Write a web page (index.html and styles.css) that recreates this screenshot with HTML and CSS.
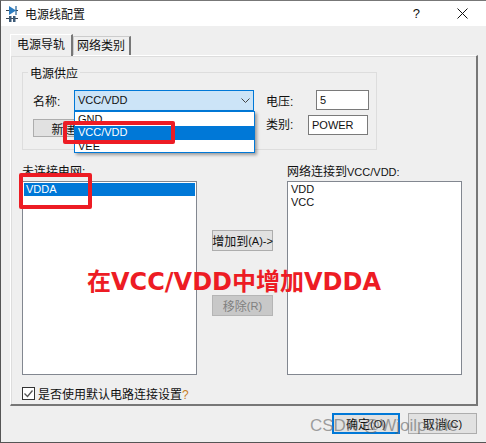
FILE: index.html
```html
<!DOCTYPE html>
<html lang="zh-CN">
<head>
    <meta charset="UTF-8">
    <meta name="viewport" content="width=device-width, initial-scale=1.0">
    <title>电源线配置</title>
    <link rel="stylesheet" href="styles.css">
</head>
<body>
    <div class="dialog">
        <!-- Title bar -->
        <div class="titlebar">
            <svg class="app-icon" width="12" height="16" viewBox="0 0 12 16">
                <path d="M0 4.5h3M10 4.5h2M0 12.5h12" stroke="#3c4650" stroke-width="1" fill="none"/>
                <path d="M3 0l7 4.5-7 4.5z" fill="#2b7cc0"/>
                <path d="M10 0v9" stroke="#1f5f96" stroke-width="1.2"/>
                <rect x="3" y="10" width="2.5" height="6" fill="#3c5a78"/>
                <rect x="7" y="10" width="2.5" height="6" fill="#3c5a78"/>
            </svg>
            <span class="title-text">电源线配置</span>
            <span class="help-btn">?</span>
            <svg class="close-btn" width="11" height="11" viewBox="0 0 11 11">
                <path d="M0.5 0.5l10 10M10.5 0.5l-10 10" stroke="#111" stroke-width="1" fill="none"/>
            </svg>
        </div>

        <div class="body">
            <!-- Tabs -->
            <div class="tabs">
                <div class="tab tab-active">电源导轨</div>
                <div class="tab">网络类别</div>
            </div>

            <div class="pane">
                <fieldset class="group">
                    <legend>电源供应</legend>
                    <div class="group-row">
                        <label class="name-label">名称:</label>
                        <div class="combo">
                            <span class="latin">VCC/VDD</span>
                            <svg width="9" height="5" viewBox="0 0 9 5"><path d="M0.5 0.5l4 4 4-4" stroke="#444" fill="none"/></svg>
                        </div>
                        <label class="volt-label">电压:</label>
                        <div class="input input-volt latin">5</div>
                    </div>
                    <div class="group-row row-two">
                        <div class="btn btn-new">新建</div>
                        <label class="class-label">类别:</label>
                        <div class="input input-class latin">POWER</div>
                    </div>
                </fieldset>

                <div class="lists">
                    <div class="list-col">
                        <div class="list-title">未连接电网:</div>
                        <div class="listbox">
                            <div class="list-item selected latin">VDDA</div>
                        </div>
                    </div>
                    <div class="move-col">
                        <div class="btn btn-move">增加到<span class="latin">(A)-&gt;</span></div>
                        <div class="btn btn-move disabled">移除<span class="latin">(R)</span></div>
                    </div>
                    <div class="list-col">
                        <div class="list-title">网络连接到<span class="latin">VCC/VDD:</span></div>
                        <div class="listbox">
                            <div class="list-item latin">VDD</div>
                            <div class="list-item latin">VCC</div>
                        </div>
                    </div>
                </div>

                <div class="check-row">
                    <svg class="checkbox" width="13" height="13" viewBox="0 0 13 13">
                        <rect x="0.5" y="0.5" width="12" height="12" fill="#fff" stroke="#333"/>
                        <path d="M2.5 6.5l3 3 5-6" stroke="#555" stroke-width="1.3" fill="none"/>
                    </svg>
                    <span>是否使用默认电路连接设置<span class="hint">?</span></span>
                </div>
            </div>

            <div class="footer">
                <div class="btn btn-ok">确定<span class="latin">(O)</span></div>
                <div class="btn btn-cancel">取消<span class="latin">(C)</span></div>
            </div>
        </div>

        <!-- Open combo list -->
        <div class="dropdown latin">
            <div class="drop-item">GND</div>
            <div class="drop-item drop-selected">VCC/VDD</div>
            <div class="drop-item">VEE</div>
        </div>

        <!-- Annotations on top of the screenshot -->
        <div class="mark mark-combo"></div>
        <div class="mark mark-net"></div>
        <div class="note">在VCC/VDD中增加VDDA</div>
        <div class="watermark">CSDN @Wjoilpcble</div>
    </div>
</body>
</html>
```

FILE: styles.css
```css
* {
    box-sizing: border-box;
}

html, body {
    margin: 0;
    height: 100%;
    overflow: hidden;
}

body {
    font-family: "Liberation Sans", "Noto Sans CJK SC", sans-serif;
    font-size: 12px;
    color: #111;
    background: #fff;
}

.latin {
    font-size: 11px;
}

.dialog {
    position: relative;
    width: 486px;
    height: 443px;
    background: #efefef;
    border-left: 1px solid #555;
    border-bottom: 1px solid #555;
    border-top: 1px solid #777;
}

.titlebar {
    display: flex;
    align-items: center;
    height: 25px;
    padding: 0 0 0 5px;
    background: #fff;
}

.app-icon {
    margin-right: 7px;
}

.title-text {
    font-size: 12px;
    flex-grow: 1;
}

.help-btn {
    font-size: 13px;
    margin-right: 37px;
}

.close-btn {
    margin-right: 18px;
}

.body {
    padding: 8px 8px 0 9px;
}

.tabs {
    display: flex;
    height: 21px;
    position: relative;
    z-index: 1;
}

.tab {
    height: 19px;
    margin-top: 2px;
    padding: 0 4px 0 3px;
    line-height: 19px;
    background: #efefef;
    border: 1px solid #ccc;
    border-bottom: none;
    border-right: 2px solid #777;
}

.tab-active {
    height: 22px;
    margin-top: 0;
    padding: 1px 6px 0 6px;
    background: #efefef;
    border-top-color: #fff;
    border-left-color: #fff;
    border-right: 2px solid #777;
}

.pane {
    width: 468px;
    height: 351px;
    padding: 8px 12px 0 11px;
    border: 1px solid #fff;
    border-right: 2px solid #777;
    border-bottom: 2px solid #777;
    box-shadow: inset 1px 1px 0 #ddd;
}

.group {
    width: 355px;
    height: 86px;
    margin: 0;
    padding: 8px 0 0 10px;
    border: 1px solid #ddd;
}

.group legend {
    padding: 0 2px;
    margin-left: -5px;
}

.group-row {
    display: flex;
    align-items: center;
    height: 22px;
}

.row-two {
    align-items: flex-start;
    margin-top: 4px;
}

.name-label {
    width: 41px;
    white-space: nowrap;
}

.combo {
    display: flex;
    align-items: center;
    justify-content: space-between;
    width: 180px;
    height: 21px;
    padding: 0 3px 0 3px;
    background: #cce4f7;
    border: 1px solid #0078d7;
}

.volt-label {
    width: 27px;
    margin-left: 12px;
    white-space: nowrap;
}

.input {
    height: 20px;
    padding-left: 3px;
    line-height: 18px;
    background: #fff;
    border: 1px solid #7a7a7a;
}

.input-volt {
    width: 53px;
    margin-left: 23px;
}

.input-class {
    width: 60px;
    margin-left: 15px;
}

.class-label {
    width: 27px;
    margin-left: 172px;
    line-height: 20px;
    white-space: nowrap;
}

.btn {
    display: flex;
    align-items: center;
    justify-content: center;
    height: 21px;
    background: #e1e1e1;
    border: 1px solid #adadad;
    white-space: nowrap;
}

.btn-new {
    width: 61px;
    height: 18px;
    margin-top: 4px;
    flex-shrink: 0;
}

.lists {
    display: flex;
    margin-top: 14px;
}

.list-col {
    width: 175px;
}

.list-title {
    height: 17px;
    line-height: 16px;
    white-space: nowrap;
}

.listbox {
    height: 194px;
    padding: 1px;
    background: #fff;
    border: 1px solid #828790;
}

.list-item {
    height: 13px;
    padding-left: 2px;
    line-height: 13px;
}

.selected {
    color: #fff;
    background: #0078d7;
}

.move-col {
    display: flex;
    flex-direction: column;
    gap: 44px;
    width: 90px;
    padding: 66px 0 0 15px;
}

.btn-move {
    width: 61px;
}

.disabled {
    color: #808080;
    background: #c8c8c8;
    border-color: #b5b5b5;
}

.check-row {
    display: flex;
    align-items: center;
    gap: 3px;
    margin-top: 11px;
    height: 14px;
}

.hint {
    color: #c8801e;
}

.footer {
    display: flex;
    justify-content: flex-end;
    gap: 8px;
    margin-top: 7px;
    padding-right: 1px;
}

.btn-ok {
    width: 68px;
    border: 2px solid #0078d7;
}

.btn-cancel {
    width: 69px;
}

.dropdown {
    position: absolute;
    left: 73px;
    top: 110px;
    width: 181px;
    height: 42px;
    padding-top: 1px;
    background: #fff;
    border: 1px solid #0078d7;
    box-shadow: 2px 2px 3px rgba(0, 0, 0, 0.35);
}

.drop-item {
    height: 13px;
    padding-left: 3px;
    line-height: 13px;
}

.drop-selected {
    height: 14px;
    color: #fff;
    background: #0078d7;
}

.mark {
    position: absolute;
    border: 4px solid #ed1c24;
    border-radius: 2px;
}

.mark-combo {
    left: 62px;
    top: 120px;
    width: 112px;
    height: 23px;
}

.mark-net {
    left: 18px;
    top: 172px;
    width: 73px;
    height: 36px;
}

.note {
    position: absolute;
    left: 86px;
    top: 265px;
    font-family: "DejaVu Sans", "Noto Sans CJK SC", sans-serif;
    font-size: 24px;
    font-weight: 700;
    line-height: 32px;
    color: #ed1c24;
    white-space: nowrap;
}

.watermark {
    position: absolute;
    left: 309px;
    top: 415px;
    font-size: 17px;
    color: rgba(100, 100, 100, 0.6);
    white-space: nowrap;
}
```
